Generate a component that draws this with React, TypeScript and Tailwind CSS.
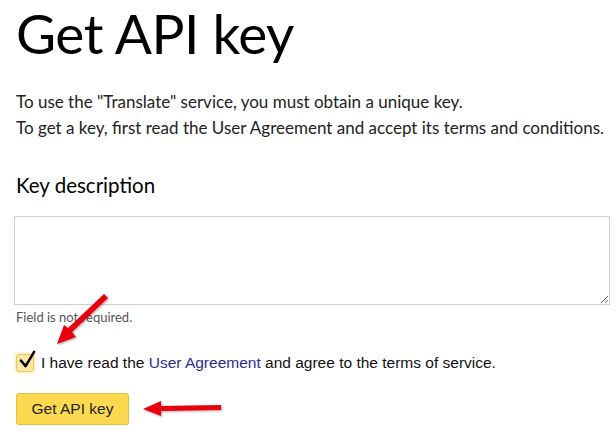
export default function App() {
  return (
    <div className="relative min-h-[433px] w-[616px] overflow-hidden bg-white pl-4 pr-[6px]">
      <h1
        className="text-[55px] leading-[66px] font-normal tracking-[-0.5px] text-black"
        style={{ fontFamily: "Lato, sans-serif" }}
      >
        Get API key
      </h1>

      <div
        className="mt-[23px] text-[17px] leading-[26px] text-[#222]"
        style={{ fontFamily: "Lato, sans-serif" }}
      >
        <p>To use the "Translate" service, you must obtain a unique key.</p>
        <p>To get a key, first read the User Agreement and accept its terms and conditions.</p>
      </div>

      <h2
        className="mt-[30px] text-[20.5px] leading-[28px] text-black"
        style={{ fontFamily: "Lato, sans-serif" }}
      >
        Key description
      </h2>

      <textarea
        className="-ml-[2px] mt-[17px] block h-[89px] w-[596px] resize-y border border-[#cfcfcf] bg-white outline-none"
        aria-label="Key description"
      />

      <p
        className="mt-[3px] text-[13px] leading-[18px] text-[#555]"
        style={{ fontFamily: "Lato, sans-serif" }}
      >
        Field is not required.
      </p>

      <label
        className="mt-[27px] flex items-center gap-[7px] text-[15.5px] leading-[20px] text-[#111]"
        style={{ fontFamily: "'Liberation Sans', Arial, sans-serif" }}
      >
        <span className="relative flex h-[18px] w-[18px] shrink-0 items-center justify-center rounded-[3px] border border-[#e6c865] bg-[#fbe7a3] shadow-[0_0_3px_1px_rgba(250,215,110,0.6)]">
          <svg viewBox="0 0 20 20" className="absolute -top-[6px] left-[1px] h-[21px] w-[19px]">
            <path d="M3 11 L8 17 L17 2" fill="none" stroke="#000" strokeWidth="2.6" strokeLinecap="round" strokeLinejoin="round" />
          </svg>
        </span>
        <span>
          I have read the <a className="text-[#2b2b90]">User Agreement</a> and agree to the terms of service.
        </span>
      </label>

      <button
        className="mt-[20px] block h-[32px] w-[113px] rounded-[3px] border border-[#e3bd3c] bg-[#fdd94f] text-[15.5px] text-[#222]"
        style={{ fontFamily: "'Liberation Sans', Arial, sans-serif" }}
      >
        Get API key
      </button>

      {/* annotation arrows */}
      <svg className="pointer-events-none absolute left-0 top-0" width="616" height="433">
        <defs>
          <filter id="sh" x="-20%" y="-20%" width="140%" height="140%">
            <feDropShadow dx="1" dy="1" stdDeviation="1" floodColor="#000" floodOpacity="0.35" />
          </filter>
        </defs>
        <g filter="url(#sh)" fill="#e8000b" stroke="none">
          <path d="M104 294 L108 298 L72 332 L76 337 L57 344 L64 325 L68 328 Z" />
          <path d="M221 405 L221 410 L161 411 L161 416 L143 409 L161 401 L161 406 Z" />
        </g>
      </svg>
    </div>
  );
}
